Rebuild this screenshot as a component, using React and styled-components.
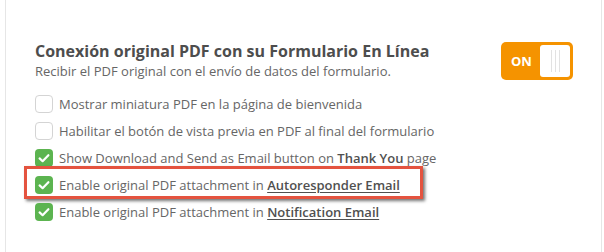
import React from "react";
import styled, { createGlobalStyle } from "styled-components";

const GlobalStyle = createGlobalStyle`
  html, body {
    margin: 0;
    padding: 0;
    background: #ffffff;
  }
  body {
    font-family: "Open Sans", "Noto Sans", sans-serif;
    overflow: hidden;
  }
`;

const getOptions = () => [
  { checked: false, text: "Mostrar miniatura PDF en la página de bienvenida" },
  { checked: false, text: "Habilitar el botón de vista previa en PDF al final del formulario" },
  {
    checked: true,
    text: (
      <>
        Show Download and Send as Email button on <Strong>Thank You</Strong> page
      </>
    ),
  },
  {
    checked: true,
    highlight: true,
    text: (
      <>
        Enable original PDF attachment in <LinkText>Autoresponder Email</LinkText>
      </>
    ),
  },
  {
    checked: true,
    text: (
      <>
        Enable original PDF attachment in <LinkText>Notification Email</LinkText>
      </>
    ),
  },
];

const Checkbox = ({ checked }) => (
  <Box $checked={checked}>
    {checked && (
      <svg width="18" height="18" viewBox="0 0 18 18">
        <polyline
          points="4.6,9.4 7.6,12.2 13.4,6.2"
          fill="none"
          stroke="#fff"
          strokeWidth="2.2"
          strokeLinecap="round"
          strokeLinejoin="round"
        />
      </svg>
    )}
  </Box>
);

const App = () => {
  const options = getOptions();
  return (
    <>
      <GlobalStyle />
      <Card>
        <Header>
          <TitleBlock>
            <Title>Conexión original PDF con su Formulario En Línea</Title>
            <Subtitle>Recibir el PDF original con el envío de datos del formulario.</Subtitle>
          </TitleBlock>
          <Toggle>
            <ToggleLabel>ON</ToggleLabel>
            <Knob>
              <Grip />
              <Grip />
              <Grip />
            </Knob>
          </Toggle>
        </Header>
        <OptionList>
          {options.map((opt, i) => (
            <OptionRow key={i}>
              <Checkbox checked={opt.checked} />
              <OptionText>{opt.text}</OptionText>
              {opt.highlight && <Highlight />}
            </OptionRow>
          ))}
        </OptionList>
      </Card>
    </>
  );
};

export default App;

const Card = styled.div`
  margin-left: 5px;
  width: 597px;
  height: 252px;
  box-sizing: border-box;
  border-left: 1px solid #e6e6e6;
  border-right: 1px solid #e6e6e6;
  padding: 41px 28px 0 29px;
`;

const Header = styled.div`
  display: flex;
  align-items: center;
  justify-content: space-between;
`;

const TitleBlock = styled.div`
  display: flex;
  flex-direction: column;
`;

const Title = styled.div`
  font-size: 16px;
  line-height: 21px;
  font-weight: 700;
  color: #4d4d4d;
`;

const Subtitle = styled.div`
  font-size: 13px;
  line-height: 18px;
  color: #666;
`;

const Toggle = styled.div`
  display: flex;
  align-items: center;
  justify-content: space-between;
  width: 72px;
  height: 38px;
  box-sizing: border-box;
  padding: 3px;
  background: #f59300;
  border-radius: 5px;
`;

const ToggleLabel = styled.span`
  padding-left: 7px;
  font-size: 13px;
  font-weight: 700;
  color: #fff;
`;

const Knob = styled.div`
  display: flex;
  align-items: center;
  justify-content: center;
  gap: 3px;
  width: 30px;
  height: 32px;
  background: #fff;
  border-radius: 3px;
`;

const Grip = styled.span`
  width: 1px;
  height: 22px;
  background: #e2e2e2;
`;

const OptionList = styled.div`
  display: flex;
  flex-direction: column;
  margin-top: 10px;
`;

const OptionRow = styled.div`
  position: relative;
  display: flex;
  align-items: center;
  gap: 6px;
  height: 27px;
`;

const Box = styled.span`
  display: flex;
  align-items: center;
  justify-content: center;
  flex: none;
  width: 18px;
  height: 18px;
  box-sizing: border-box;
  border-radius: 4px;
  border: ${(p) => (p.$checked ? "none" : "1.5px solid #d4d4d4")};
  background: ${(p) => (p.$checked ? "#5cb450" : "#fff")};
`;

const OptionText = styled.span`
  font-size: 13px;
  line-height: 18px;
  color: #666;
  white-space: nowrap;
`;

const Strong = styled.b`
  font-weight: 600;
  color: #505050;
`;

const LinkText = styled.span`
  font-weight: 600;
  color: #505050;
  text-decoration: underline;
  text-underline-offset: 2px;
`;

const Highlight = styled.span`
  position: absolute;
  left: -11px;
  top: -5px;
  width: 399px;
  height: 33px;
  box-sizing: border-box;
  border: 3px solid #e4533f;
  box-shadow: 2px 2px 3px rgba(0, 0, 0, 0.55);
  pointer-events: none;
`;
